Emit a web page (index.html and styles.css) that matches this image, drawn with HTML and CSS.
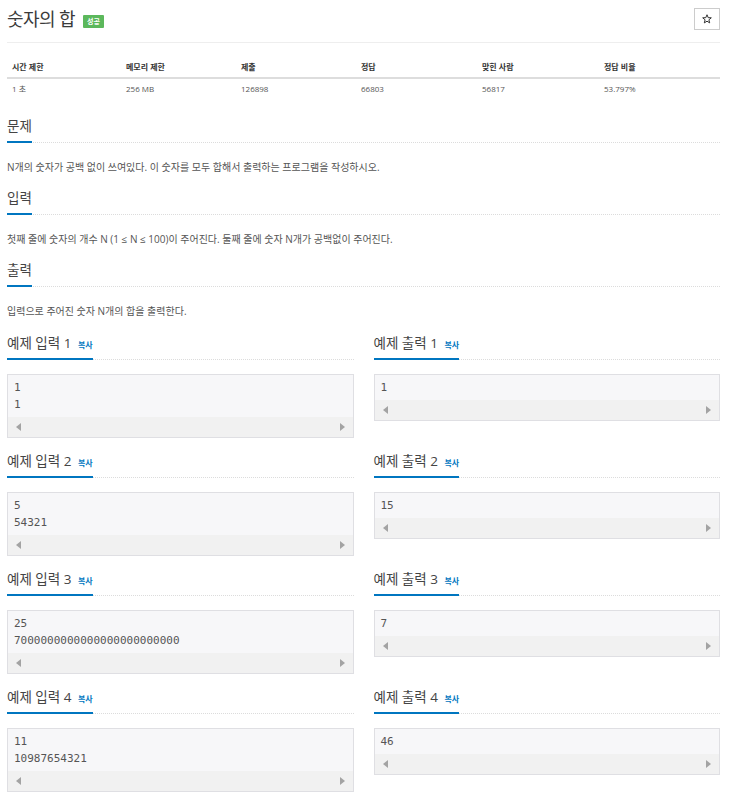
FILE: index.html
```html
<!DOCTYPE html>
<html lang="ko">
<head>
<meta charset="utf-8">
<title>숫자의 합</title>
<link rel="stylesheet" href="styles.css">
</head>
<body>
<div class="page">
  <div class="page-header">
    <h1 class="title">숫자의 합 <span class="badge">성공</span></h1>
    <button class="star" type="button"><svg width="10" height="10" viewBox="0 0 20 20"><polygon points="10,1.5 12.4,7.3 18.6,7.6 13.8,11.6 15.4,17.8 10,14.4 4.6,17.8 6.2,11.6 1.4,7.6 7.6,7.3" fill="none" stroke="#333" stroke-width="2" stroke-linejoin="round"/></svg></button>
  </div>

  <div class="info">
    <div class="info-head">시간 제한</div>
    <div class="info-head">메모리 제한</div>
    <div class="info-head">제출</div>
    <div class="info-head">정답</div>
    <div class="info-head">맞힌 사람</div>
    <div class="info-head">정답 비율</div>
    <div class="info-cell">1 초</div>
    <div class="info-cell">256 MB</div>
    <div class="info-cell">126898</div>
    <div class="info-cell">66803</div>
    <div class="info-cell">56817</div>
    <div class="info-cell">53.797%</div>
  </div>

  <section class="section first">
    <div class="headline"><h2>문제</h2></div>
    <p class="text">N개의 숫자가 공백 없이 쓰여있다. 이 숫자를 모두 합해서 출력하는 프로그램을 작성하시오.</p>
  </section>

  <section class="section">
    <div class="headline"><h2>입력</h2></div>
    <p class="text">첫째 줄에 숫자의 개수 N (1 ≤ N ≤ 100)이 주어진다. 둘째 줄에 숫자 N개가 공백없이 주어진다.</p>
  </section>

  <section class="section">
    <div class="headline"><h2>출력</h2></div>
    <p class="text">입력으로 주어진 숫자 N개의 합을 출력한다.</p>
  </section>

  <div class="samples">
    <div class="sample">
      <div class="headline"><h2>예제 입력 1 <a class="copy">복사</a></h2></div>
      <div class="box"><pre class="code">1
1</pre><div class="scrollbar"><svg width="5" height="8" viewBox="0 0 5 8"><polygon points="5,0 5,8 0,4"/></svg><svg width="5" height="8" viewBox="0 0 5 8"><polygon points="0,0 0,8 5,4"/></svg></div></div>
    </div>
    <div class="sample">
      <div class="headline"><h2>예제 출력 1 <a class="copy">복사</a></h2></div>
      <div class="box"><pre class="code">1</pre><div class="scrollbar"><svg width="5" height="8" viewBox="0 0 5 8"><polygon points="5,0 5,8 0,4"/></svg><svg width="5" height="8" viewBox="0 0 5 8"><polygon points="0,0 0,8 5,4"/></svg></div></div>
    </div>

    <div class="sample">
      <div class="headline"><h2>예제 입력 2 <a class="copy">복사</a></h2></div>
      <div class="box"><pre class="code">5
54321</pre><div class="scrollbar"><svg width="5" height="8" viewBox="0 0 5 8"><polygon points="5,0 5,8 0,4"/></svg><svg width="5" height="8" viewBox="0 0 5 8"><polygon points="0,0 0,8 5,4"/></svg></div></div>
    </div>
    <div class="sample">
      <div class="headline"><h2>예제 출력 2 <a class="copy">복사</a></h2></div>
      <div class="box"><pre class="code">15</pre><div class="scrollbar"><svg width="5" height="8" viewBox="0 0 5 8"><polygon points="5,0 5,8 0,4"/></svg><svg width="5" height="8" viewBox="0 0 5 8"><polygon points="0,0 0,8 5,4"/></svg></div></div>
    </div>

    <div class="sample">
      <div class="headline"><h2>예제 입력 3 <a class="copy">복사</a></h2></div>
      <div class="box"><pre class="code">25
7000000000000000000000000</pre><div class="scrollbar"><svg width="5" height="8" viewBox="0 0 5 8"><polygon points="5,0 5,8 0,4"/></svg><svg width="5" height="8" viewBox="0 0 5 8"><polygon points="0,0 0,8 5,4"/></svg></div></div>
    </div>
    <div class="sample">
      <div class="headline"><h2>예제 출력 3 <a class="copy">복사</a></h2></div>
      <div class="box"><pre class="code">7</pre><div class="scrollbar"><svg width="5" height="8" viewBox="0 0 5 8"><polygon points="5,0 5,8 0,4"/></svg><svg width="5" height="8" viewBox="0 0 5 8"><polygon points="0,0 0,8 5,4"/></svg></div></div>
    </div>

    <div class="sample">
      <div class="headline"><h2>예제 입력 4 <a class="copy">복사</a></h2></div>
      <div class="box"><pre class="code">11
10987654321</pre><div class="scrollbar"><svg width="5" height="8" viewBox="0 0 5 8"><polygon points="5,0 5,8 0,4"/></svg><svg width="5" height="8" viewBox="0 0 5 8"><polygon points="0,0 0,8 5,4"/></svg></div></div>
    </div>
    <div class="sample">
      <div class="headline"><h2>예제 출력 4 <a class="copy">복사</a></h2></div>
      <div class="box"><pre class="code">46</pre><div class="scrollbar"><svg width="5" height="8" viewBox="0 0 5 8"><polygon points="5,0 5,8 0,4"/></svg><svg width="5" height="8" viewBox="0 0 5 8"><polygon points="0,0 0,8 5,4"/></svg></div></div>
    </div>
  </div>
</div>
</body>
</html>
```

FILE: styles.css
```css
* { box-sizing: border-box; }

body {
  margin: 0;
  background: #fff;
  font-family: "Open Sans", "Noto Sans CJK KR", sans-serif;
  color: #555;
}

.page {
  padding: 0 16px 0 7px;
}

.page-header {
  display: flex;
  justify-content: space-between;
  align-items: flex-start;
  height: 43px;
  border-bottom: 1px solid #eee;
}

.title {
  margin: 5px 0 0;
  font-size: 18px;
  line-height: 28px;
  font-weight: 400;
  color: #3a3a3a;
  letter-spacing: -0.6px;
}

.badge {
  display: inline-block;
  vertical-align: 2px;
  margin-left: 4px;
  padding: 0 4px;
  height: 13px;
  line-height: 13px;
  font-size: 7px;
  font-weight: 700;
  color: #fff;
  background: #5cb85c;
  border-radius: 1px;
  letter-spacing: 0;
}

.star {
  display: flex;
  align-items: center;
  justify-content: center;
  margin-top: 8px;
  width: 26px;
  height: 22px;
  padding: 0;
  border: 1px solid #ccc;
  background: #fff;
}

.star svg {
  display: block;
}

.info {
  display: grid;
  grid-template-columns: 114px 115px 120px 121px 122px 1fr;
  margin-top: 13px;
}

.info-head {
  height: 23px;
  line-height: 21px;
  padding: 0 5px;
  font-size: 8px;
  font-weight: 700;
  color: #333;
  border-bottom: 2px solid #ddd;
}

.info-cell {
  height: 20px;
  line-height: 20px;
  padding: 0 5px;
  font-size: 8px;
  color: #555;
}

.section {
  margin-top: 13px;
}

.section.first {
  margin-top: 17px;
}

.headline {
  display: flex;
  border-bottom: 1px dotted #dcdcdc;
}

.headline h2 {
  margin: 0 0 -1px;
  padding-bottom: 5px;
  height: 27px;
  font-size: 13.5px;
  line-height: 20px;
  font-weight: 400;
  color: #444;
  border-bottom: 2px solid #0076c0;
}

.copy {
  margin-left: 3px;
  font-size: 8px;
  line-height: 1;
  font-weight: 700;
  color: #0076c0;
}

.text {
  margin: 16px 0 0;
  font-size: 10px;
  line-height: 16px;
  color: #555;
}

.samples {
  display: grid;
  grid-template-columns: 1fr 1fr;
  column-gap: 20px;
  row-gap: 13px;
  align-items: start;
  margin-top: 14px;
}

.box {
  margin-top: 14px;
  border: 1px solid #dfdfe3;
  background: #f7f7f9;
}

.code {
  margin: 0;
  padding: 4px 6px 4px;
  font-family: "DejaVu Sans Mono", monospace;
  font-size: 11px;
  line-height: 17px;
  color: #555;
}

.scrollbar {
  display: flex;
  justify-content: space-between;
  align-items: center;
  height: 20px;
  padding: 0 8px 0 8px;
  background: #f1f1f1;
}

.scrollbar svg {
  display: block;
  fill: #a3a3a3;
}
```
